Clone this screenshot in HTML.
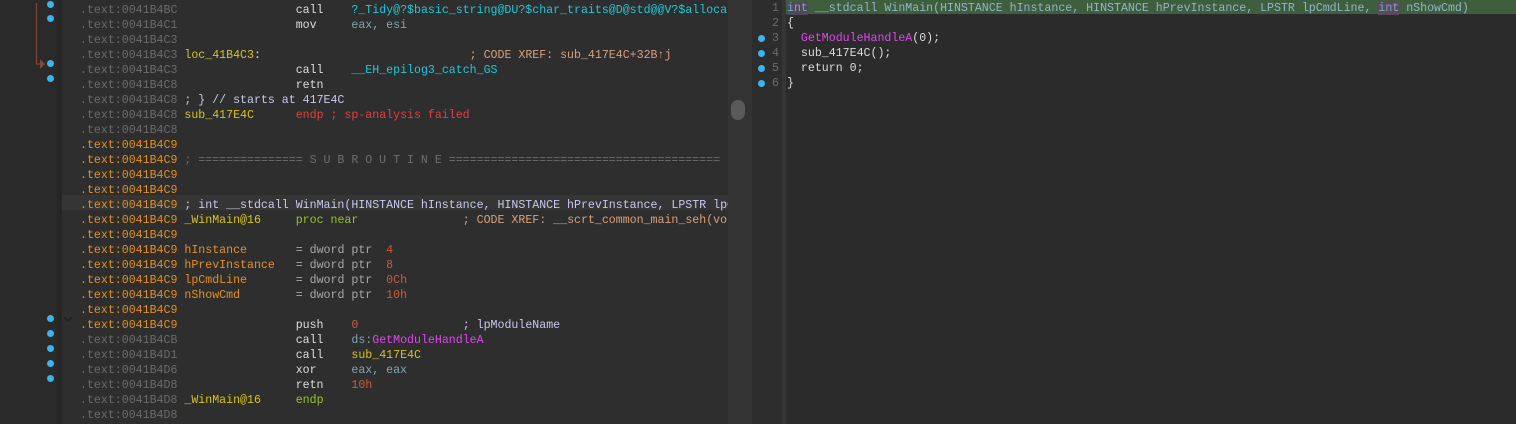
<!DOCTYPE html>
<html><head><meta charset="utf-8"><style>
html,body{margin:0;padding:0;width:1516px;height:424px;overflow:hidden;background:#2b2b2b;font-family:"Liberation Mono",monospace;font-size:11.6px}
.abs{position:absolute}
pre{margin:0;font:inherit;line-height:15px;white-space:pre}
.a{color:#6b6b6b}.o{color:#e5901f}.w{color:#dcdcdc}.c{color:#1fc8d8}.y{color:#d8c41c}.r{color:#e83e3e}
.t{color:#d9a07a}.l{color:#c8c8f0}.g{color:#7fa7ae}.n{color:#cc5a38}.gr{color:#94c42a}.d{color:#a8a8a8}.s{color:#6e6e6e}.m{color:#e046ec}
.dot{position:absolute;width:7px;height:7px;border-radius:50%;background:#3cb4f0}
</style></head><body>
<div class="abs" style="left:0;top:0;width:57px;height:424px;background:#2a2a2a"></div>
<div class="abs" style="left:57px;top:0;width:5px;height:424px;background:#262626"></div>
<div class="abs" style="left:62px;top:0;width:666px;height:424px;background:#2e2e2e"></div>
<div class="abs" style="left:62px;top:195px;width:666px;height:15px;background:#353535"></div>
<div class="abs" style="left:728px;top:0;width:24px;height:424px;background:#333"></div>
<div class="abs" style="left:731px;top:100px;width:14px;height:20px;border-radius:7px;background:#5a5a5a"></div>
<div class="abs" style="left:752px;top:0;width:30px;height:424px;background:#2d2d2d"></div>
<div class="abs" style="left:782px;top:0;width:4px;height:424px;background:#363636"></div>
<div class="abs" style="left:786px;top:0;width:730px;height:14px;background:#3f5e3d"></div>
<svg class="abs" style="left:0;top:0" width="60" height="80"><path d="M36.5 3V64H42" stroke="#7a4a35" stroke-width="1.2" fill="none"/><path d="M40 59L45 64L40 69Z" fill="#7a4a35"/></svg>
<svg class="abs" style="left:62px;top:315px" width="14" height="10"><path d="M2 2L6 6L10 2" stroke="#222" stroke-width="2" fill="none"/></svg>
<div class="dot" style="left:47px;top:1px"></div><div class="dot" style="left:47px;top:15px"></div>
<div class="dot" style="left:47px;top:60px"></div><div class="dot" style="left:47px;top:75px"></div>
<div class="dot" style="left:47px;top:315px"></div><div class="dot" style="left:47px;top:330px"></div>
<div class="dot" style="left:47px;top:345px"></div><div class="dot" style="left:47px;top:360px"></div><div class="dot" style="left:47px;top:375px"></div>
<div class="abs" style="left:80px;top:3px;width:648px;overflow:hidden"><pre><span class="a">.text:0041B4BC</span>                 <span class="w">call</span>    <span class="c">?_Tidy@?$basic_string@DU?$char_traits@D@std@@V?$allocator@D@2@@std@@AAEX_N@Z</span>
<span class="a">.text:0041B4C1</span>                 <span class="w">mov</span>     <span class="g">eax, esi</span>
<span class="a">.text:0041B4C3</span>
<span class="a">.text:0041B4C3</span> <span class="y">loc_41B4C3</span><span class="w">:</span>                              <span class="t">; CODE XREF: sub_417E4C+32B↑j</span>
<span class="a">.text:0041B4C3</span>                 <span class="w">call</span>    <span class="c">__EH_epilog3_catch_GS</span>
<span class="a">.text:0041B4C8</span>                 <span class="w">retn</span>
<span class="a">.text:0041B4C8</span> <span class="l">; } // starts at 417E4C</span>
<span class="a">.text:0041B4C8</span> <span class="y">sub_417E4C</span>      <span class="r">endp ; sp-analysis failed</span>
<span class="a">.text:0041B4C8</span>
<span class="o">.text:0041B4C9</span>
<span class="o">.text:0041B4C9</span> <span class="s">; =============== S U B R O U T I N E =======================================</span>
<span class="o">.text:0041B4C9</span>
<span class="o">.text:0041B4C9</span>
<span class="o">.text:0041B4C9</span> <span class="l">; int __stdcall WinMain(HINSTANCE hInstance, HINSTANCE hPrevInstance, LPSTR lpCmdLine, int nShowCmd)</span>
<span class="o">.text:0041B4C9</span> <span class="y">_WinMain@16</span>     <span class="gr">proc near</span>               <span class="t">; CODE XREF: __scrt_common_main_seh(void)+F5↓p</span>
<span class="o">.text:0041B4C9</span>
<span class="o">.text:0041B4C9</span> <span class="o">hInstance</span>       <span class="d">= dword ptr</span>  <span class="n">4</span>
<span class="o">.text:0041B4C9</span> <span class="o">hPrevInstance</span>   <span class="d">= dword ptr</span>  <span class="n">8</span>
<span class="o">.text:0041B4C9</span> <span class="o">lpCmdLine</span>       <span class="d">= dword ptr</span>  <span class="n">0Ch</span>
<span class="o">.text:0041B4C9</span> <span class="o">nShowCmd</span>        <span class="d">= dword ptr</span>  <span class="n">10h</span>
<span class="o">.text:0041B4C9</span>
<span class="o">.text:0041B4C9</span>                 <span class="w">push</span>    <span class="n">0</span>               <span class="l">; lpModuleName</span>
<span class="a">.text:0041B4CB</span>                 <span class="w">call</span>    <span class="g">ds:</span><span class="m">GetModuleHandleA</span>
<span class="a">.text:0041B4D1</span>                 <span class="w">call</span>    <span class="y">sub_417E4C</span>
<span class="a">.text:0041B4D6</span>                 <span class="w">xor</span>     <span class="g">eax, eax</span>
<span class="a">.text:0041B4D8</span>                 <span class="w">retn</span>    <span class="n">10h</span>
<span class="a">.text:0041B4D8</span> <span class="y">_WinMain@16</span>     <span class="gr">endp</span>
<span class="a">.text:0041B4D8</span></pre></div>
<div class="dot" style="left:758px;top:35px"></div><div class="dot" style="left:758px;top:50px"></div><div class="dot" style="left:758px;top:65px"></div><div class="dot" style="left:758px;top:80px"></div>
<div class="abs" style="left:772px;top:1px"><pre class="a">1
2
3
4
5
6</pre></div>
<div class="abs" style="left:787px;top:1px"><pre><span style="color:#7aa6c8;background:#4e4a5a">int</span><span style="color:#8fb7c8"> __stdcall WinMain(HINSTANCE hInstance, HINSTANCE hPrevInstance, LPSTR lpCmdLine, <span style="background:#5a4a5a;color:#7aa6c8">int</span> nShowCmd)</span>
<span class="w">{</span>
  <span class="m">GetModuleHandleA</span><span class="w">(0);</span>
  <span class="w">sub_417E4C();</span>
  <span class="w">return 0;</span>
<span class="w">}</span></pre></div>
</body></html>
